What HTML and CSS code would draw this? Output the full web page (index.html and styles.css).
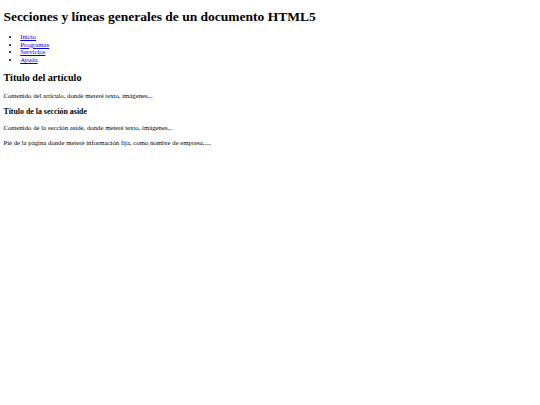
FILE: index.html
```html
<!DOCTYPE html>
<html lang="es">
<head>
<meta charset="utf-8">
<title>Secciones y líneas generales de un documento HTML5</title>
<link rel="stylesheet" href="styles.css">
</head>
<body class="page">
<header class="site-header">
<h1 class="title">Secciones y líneas generales de un documento HTML5</h1>
</header>
<nav class="nav">
<ul class="nav-list">
<li class="nav-item"><a class="nav-link" href="#">Inicio</a></li>
<li class="nav-item"><a class="nav-link" href="#">Programas</a></li>
<li class="nav-item"><a class="nav-link" href="#">Servicios</a></li>
<li class="nav-item"><a class="nav-link" href="#">Ayuda</a></li>
</ul>
</nav>
<section class="main">
<article class="article">
<h2 class="article-title">Título del artículo</h2>
<p class="text">Contenido del artículo, donde meteré texto, imágenes,..</p>
</article>
</section>
<aside class="aside">
<h3 class="aside-title">Título de la sección aside</h3>
<p class="text">Contenido de la sección aside, donde meteré texto, imágenes,..</p>
</aside>
<footer class="footer">
<p class="text">Pié de la página donde meteré información fija, como nombre de empresa,....</p>
</footer>
</body>
</html>
```
FILE: styles.css
```css
html { background: #fff; }
.page {
  margin: 3.375px;
  font-family: "Liberation Serif", "Times New Roman", serif;
  font-size: 6.75px;
  line-height: 7.594px;
  color: #000;
}
.title {
  font-size: 13.5px;
  line-height: 15.61px;
  margin: 5.2px 0 9.045px;
  font-weight: bold;
}
.nav-list {
  margin: 6.75px 0;
  padding-left: 16.875px;
}
.nav-item { line-height: 7.594px; }
.nav-link { color: #0000ee; }
.article-title {
  font-size: 10.125px;
  line-height: 11.39px;
  margin: 8.404px 0;
  font-weight: bold;
}
.aside-title {
  font-size: 7.898px;
  line-height: 9.28px;
  margin: 7.898px 0;
  font-weight: bold;
}
.text { margin: 6.75px 0; }
```
